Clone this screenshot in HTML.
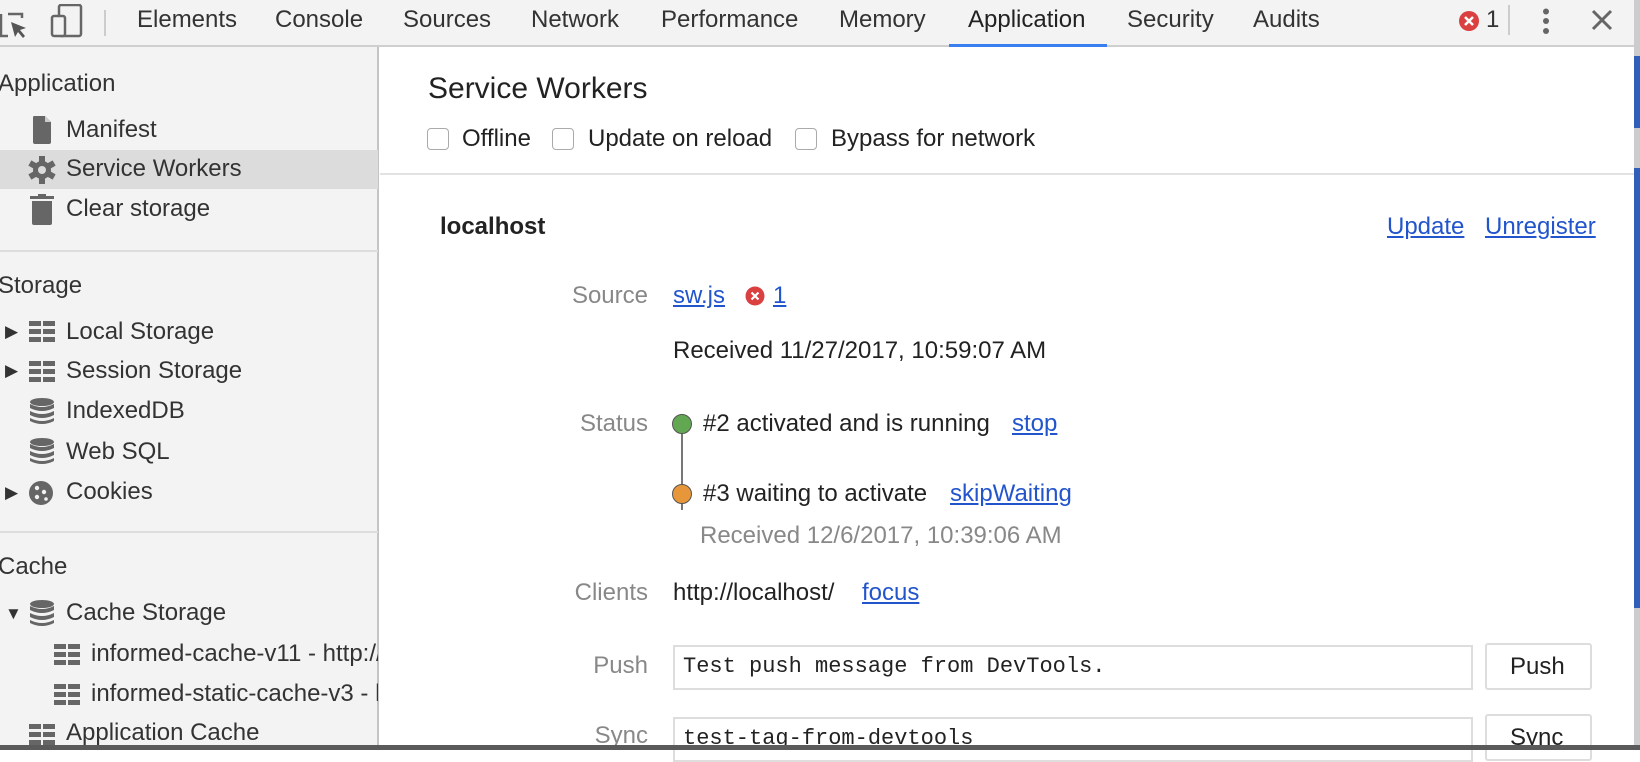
<!DOCTYPE html>
<html><head><meta charset="utf-8"><style>
*{margin:0;padding:0;box-sizing:border-box}
body{width:1640px;height:750px;overflow:hidden;background:#fff;font-family:"Liberation Sans",Arial,sans-serif;font-size:24px;color:#333;position:relative}
.a{position:absolute;white-space:nowrap;line-height:28px}
.tb{position:absolute;left:0;top:0;width:1634px;height:47px;background:#f3f3f3;border-bottom:2px solid #cfcfcf}
.tab{position:absolute;top:6px;color:#333}
.sb{position:absolute;left:0;top:47px;width:379px;height:703px;background:#f3f3f3;border-right:2px solid #c4c4c4}
.hd{color:#333}
.lnk{color:#2255cc;text-decoration:underline}
.lbl{color:#888;text-align:right;width:200px}
.g{color:#888}
.k{color:#222}
svg{position:absolute}
</style></head><body>
<div class="tb"></div>
<svg style="left:0;top:6px" width="30" height="34" viewBox="0 0 30 34"><path d="M8 8H22V12M1 8V30H8" fill="none" stroke="#666" stroke-width="2.5"/><path d="M11 16L26 22L20 24L25 30L23 32L18 26L15 31Z" fill="#555"/></svg>
<svg style="left:50px;top:4px" width="34" height="34" viewBox="0 0 34 34"><rect x="9" y="1" width="22" height="31" rx="2" fill="none" stroke="#666" stroke-width="2.5"/><rect x="2" y="12" width="13" height="20" rx="2" fill="#f3f3f3" stroke="#666" stroke-width="2.5"/></svg>
<div style="position:absolute;left:104px;top:10px;width:2px;height:26px;background:#ccc"></div>
<div class="a tab" style="left:137px">Elements</div>
<div class="a tab" style="left:275px">Console</div>
<div class="a tab" style="left:403px">Sources</div>
<div class="a tab" style="left:531px">Network</div>
<div class="a tab" style="left:661px">Performance</div>
<div class="a tab" style="left:839px">Memory</div>
<div class="a tab" style="left:968px;color:#222">Application</div>
<div style="position:absolute;left:949px;top:44px;width:158px;height:3px;background:#3a7ff0"></div>
<div class="a tab" style="left:1127px">Security</div>
<div class="a tab" style="left:1253px">Audits</div>
<svg style="left:1458px;top:10px" width="22" height="22" viewBox="0 0 22 22"><circle cx="11" cy="11" r="10" fill="#d9403f"/><path d="M7 7L15 15M15 7L7 15" stroke="#fff" stroke-width="2.5"/></svg>
<div class="a tab" style="left:1486px">1</div>
<div style="position:absolute;left:1508px;top:5px;width:2px;height:30px;background:#ccc"></div>
<svg style="left:1540px;top:8px" width="12" height="30"><circle cx="6" cy="3.5" r="3" fill="#666"/><circle cx="6" cy="13" r="3" fill="#666"/><circle cx="6" cy="23" r="3" fill="#666"/></svg>
<svg style="left:1591px;top:9px" width="22" height="22"><path d="M2 2L20 20M20 2L2 20" stroke="#666" stroke-width="3"/></svg>
<div style="position:absolute;left:1634px;top:0;width:6px;height:750px;background:#ccc"></div>
<div style="position:absolute;left:1634px;top:56px;width:6px;height:72px;background:#2f5fb8"></div>
<div style="position:absolute;left:1634px;top:168px;width:6px;height:440px;background:#2f5fb8"></div>

<div class="sb"></div>
<div class="a hd" style="left:-2px;top:70px">Application</div>
<svg style="left:32px;top:115px" width="20" height="30" viewBox="0 0 20 30"><path d="M2 1H13L19 7V27Q19 29 17 29H3Q1 29 1 27V3Q1 1 2 1Z" fill="#666"/><path d="M13 1V7H19" fill="#ccc"/></svg>
<div class="a" style="left:66px;top:116px">Manifest</div>
<div style="position:absolute;left:0;top:150px;width:378px;height:39px;background:#dcdcdc"></div>
<svg style="left:28px;top:156px" width="28" height="28" viewBox="-14 -14 28 28"><g fill="#666"><circle r="9"/><rect x="-3" y="-14" width="6" height="28"/><rect x="-3" y="-14" width="6" height="28" transform="rotate(60)"/><rect x="-3" y="-14" width="6" height="28" transform="rotate(120)"/></g><circle r="4" fill="#dcdcdc"/></svg>
<div class="a" style="left:66px;top:155px">Service Workers</div>
<svg style="left:30px;top:194px" width="24" height="32" viewBox="0 0 24 32"><rect x="0" y="2" width="24" height="3" fill="#666"/><rect x="8" y="0" width="8" height="3" fill="#666"/><path d="M2 7H22V29Q22 31 20 31H4Q2 31 2 29Z" fill="#666"/></svg>
<div class="a" style="left:66px;top:195px">Clear storage</div>
<div style="position:absolute;left:0;top:250px;width:378px;height:2px;background:#ddd"></div>
<div class="a hd" style="left:-2px;top:272px">Storage</div>
<div class="a" style="left:5px;top:318px;font-size:17px">▶</div>
<svg style="left:29px;top:321px" width="26" height="22"><g fill="#666"><rect x="0" y="0" width="12" height="5"/><rect x="14" y="0" width="12" height="5"/><rect x="0" y="8" width="12" height="5"/><rect x="14" y="8" width="12" height="5"/><rect x="0" y="16" width="12" height="5"/><rect x="14" y="16" width="12" height="5"/></g></svg>
<div class="a" style="left:66px;top:318px">Local Storage</div>
<div class="a" style="left:5px;top:357px;font-size:17px">▶</div>
<svg style="left:29px;top:361px" width="26" height="22"><g fill="#666"><rect x="0" y="0" width="12" height="5"/><rect x="14" y="0" width="12" height="5"/><rect x="0" y="8" width="12" height="5"/><rect x="14" y="8" width="12" height="5"/><rect x="0" y="16" width="12" height="5"/><rect x="14" y="16" width="12" height="5"/></g></svg>
<div class="a" style="left:66px;top:357px">Session Storage</div>
<svg style="left:29px;top:398px" width="26" height="27" viewBox="0 0 26 27"><g fill="#666"><ellipse cx="13" cy="4" rx="12" ry="4"/><path d="M1 6Q13 12 25 6V10Q13 16 1 10Z"/><path d="M1 13Q13 19 25 13V17Q13 23 1 17Z"/><path d="M1 20Q13 26 25 20V23Q13 29 1 23Z"/></g></svg>
<div class="a" style="left:66px;top:397px">IndexedDB</div>
<svg style="left:29px;top:438px" width="26" height="27" viewBox="0 0 26 27"><g fill="#666"><ellipse cx="13" cy="4" rx="12" ry="4"/><path d="M1 6Q13 12 25 6V10Q13 16 1 10Z"/><path d="M1 13Q13 19 25 13V17Q13 23 1 17Z"/><path d="M1 20Q13 26 25 20V23Q13 29 1 23Z"/></g></svg>
<div class="a" style="left:66px;top:438px">Web SQL</div>
<div class="a" style="left:5px;top:479px;font-size:17px">▶</div>
<svg style="left:28px;top:480px" width="26" height="26" viewBox="0 0 26 26"><circle cx="13" cy="13" r="12" fill="#666"/><g fill="#f3f3f3"><circle cx="9" cy="8" r="2.2"/><circle cx="16" cy="12" r="2.2"/><circle cx="9" cy="17" r="2.2"/><circle cx="18" cy="19" r="1.8"/></g></svg>
<div class="a" style="left:66px;top:478px">Cookies</div>
<div style="position:absolute;left:0;top:531px;width:378px;height:2px;background:#ddd"></div>
<div class="a hd" style="left:-2px;top:553px">Cache</div>
<div class="a" style="left:5px;top:600px;font-size:17px">▼</div>
<svg style="left:29px;top:600px" width="26" height="27" viewBox="0 0 26 27"><g fill="#666"><ellipse cx="13" cy="4" rx="12" ry="4"/><path d="M1 6Q13 12 25 6V10Q13 16 1 10Z"/><path d="M1 13Q13 19 25 13V17Q13 23 1 17Z"/><path d="M1 20Q13 26 25 20V23Q13 29 1 23Z"/></g></svg>
<div class="a" style="left:66px;top:599px">Cache Storage</div>
<svg style="left:54px;top:644px" width="26" height="22"><g fill="#666"><rect x="0" y="0" width="12" height="5"/><rect x="14" y="0" width="12" height="5"/><rect x="0" y="8" width="12" height="5"/><rect x="14" y="8" width="12" height="5"/><rect x="0" y="16" width="12" height="5"/><rect x="14" y="16" width="12" height="5"/></g></svg>
<div class="a" style="left:91px;top:640px;width:287px;overflow:hidden">informed-cache-v11 - http://localhost</div>
<svg style="left:54px;top:684px" width="26" height="22"><g fill="#666"><rect x="0" y="0" width="12" height="5"/><rect x="14" y="0" width="12" height="5"/><rect x="0" y="8" width="12" height="5"/><rect x="14" y="8" width="12" height="5"/><rect x="0" y="16" width="12" height="5"/><rect x="14" y="16" width="12" height="5"/></g></svg>
<div class="a" style="left:91px;top:680px;width:287px;overflow:hidden">informed-static-cache-v3 - http</div>
<svg style="left:29px;top:724px" width="26" height="22"><g fill="#666"><rect x="0" y="0" width="12" height="5"/><rect x="14" y="0" width="12" height="5"/><rect x="0" y="8" width="12" height="5"/><rect x="14" y="8" width="12" height="5"/><rect x="0" y="16" width="12" height="5"/><rect x="14" y="16" width="12" height="5"/></g></svg>
<div class="a" style="left:66px;top:719px">Application Cache</div>

<div class="a k" style="left:428px;top:72px;font-size:30px;line-height:34px">Service Workers</div>
<div style="position:absolute;left:427px;top:128px;width:22px;height:22px;border:1.5px solid #aaa;border-radius:4px;background:#fff"></div>
<div class="a k" style="left:462px;top:125px">Offline</div>
<div style="position:absolute;left:552px;top:128px;width:22px;height:22px;border:1.5px solid #aaa;border-radius:4px;background:#fff"></div>
<div class="a k" style="left:588px;top:125px">Update on reload</div>
<div style="position:absolute;left:795px;top:128px;width:22px;height:22px;border:1.5px solid #aaa;border-radius:4px;background:#fff"></div>
<div class="a k" style="left:831px;top:125px">Bypass for network</div>
<div style="position:absolute;left:380px;top:173px;width:1254px;height:2px;background:#e2e2e2"></div>

<div class="a k" style="left:440px;top:213px;font-weight:bold">localhost</div>
<div class="a lnk" style="left:1387px;top:213px">Update</div>
<div class="a lnk" style="left:1485px;top:213px">Unregister</div>

<div class="a lbl" style="left:448px;top:282px">Source</div>
<div class="a lnk" style="left:673px;top:282px">sw.js</div>
<svg style="left:745px;top:286px" width="20" height="20"><circle cx="10" cy="10" r="9.5" fill="#d9403f"/><path d="M6.5 6.5L13.5 13.5M13.5 6.5L6.5 13.5" stroke="#fff" stroke-width="2.2"/></svg>
<div class="a lnk" style="left:773px;top:282px">1</div>
<div class="a k" style="left:673px;top:337px">Received 11/27/2017, 10:59:07 AM</div>

<div class="a lbl" style="left:448px;top:410px">Status</div>
<div style="position:absolute;left:681px;top:424px;width:2px;height:86px;background:#777"></div>
<div style="position:absolute;left:672px;top:414px;width:20px;height:20px;border-radius:50%;background:#62a853;border:1.5px solid #555"></div>
<div class="a k" style="left:703px;top:410px">#2 activated and is running</div>
<div class="a lnk" style="left:1012px;top:410px">stop</div>
<div style="position:absolute;left:672px;top:484px;width:20px;height:20px;border-radius:50%;background:#e8963a;border:1.5px solid #555"></div>
<div class="a k" style="left:703px;top:480px">#3 waiting to activate</div>
<div class="a lnk" style="left:950px;top:480px">skipWaiting</div>
<div class="a g" style="left:700px;top:522px">Received 12/6/2017, 10:39:06 AM</div>

<div class="a lbl" style="left:448px;top:579px">Clients</div>
<div class="a k" style="left:673px;top:579px">http://localhost/</div>
<div class="a lnk" style="left:862px;top:579px">focus</div>

<div class="a lbl" style="left:448px;top:652px">Push</div>
<div style="position:absolute;left:673px;top:645px;width:800px;height:45px;border:2px solid #ddd;background:#fff"></div>
<div class="a" style="left:683px;top:653px;font-family:'Liberation Mono',monospace;font-size:22px;color:#222">Test push message from DevTools.</div>
<div style="position:absolute;left:1485px;top:643px;width:107px;height:47px;border:2px solid #ddd;border-radius:3px;background:#fff"></div>
<div class="a k" style="left:1510px;top:653px">Push</div>

<div class="a lbl" style="left:448px;top:722px">Sync</div>
<div style="position:absolute;left:673px;top:717px;width:800px;height:45px;border:2px solid #ddd;background:#fff"></div>
<div class="a" style="left:683px;top:725px;font-family:'Liberation Mono',monospace;font-size:22px;color:#222">test-tag-from-devtools</div>
<div style="position:absolute;left:1485px;top:714px;width:107px;height:47px;border:2px solid #ddd;border-radius:3px;background:#fff"></div>
<div class="a k" style="left:1510px;top:724px">Sync</div>

<div style="position:absolute;left:0;top:745px;width:1640px;height:5px;background:#5a5a5a"></div>
</body></html>
